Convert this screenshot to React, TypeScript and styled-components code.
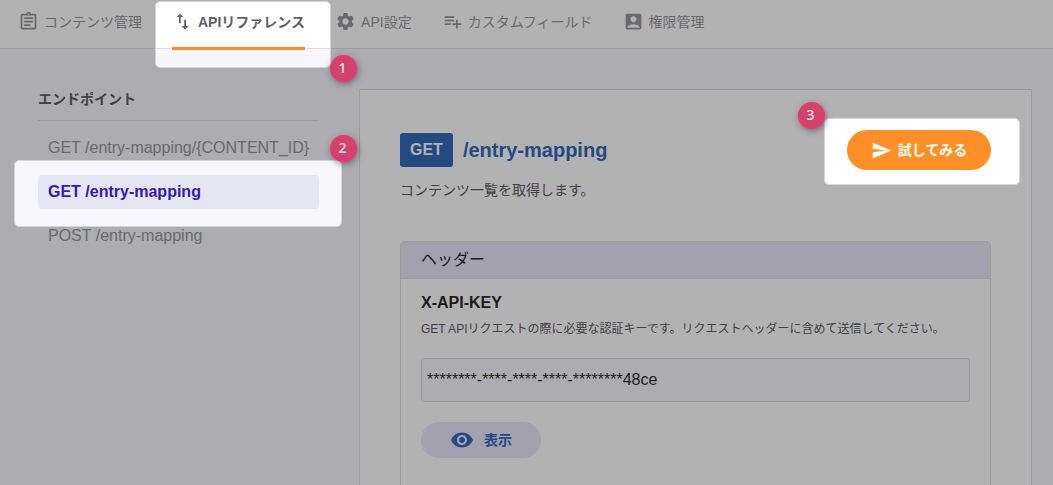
import React from "react";
import styled, { createGlobalStyle, css } from "styled-components";
import {
  MdAccountBox,
  MdImportExport,
  MdOutlineAssignment,
  MdPlaylistAdd,
  MdRemoveRedEye,
  MdSend,
  MdSettings,
} from "react-icons/md";

const color = {
  pageDim: "#adacb1",
  pageLit: "#f7f6fc",
  surfaceDim: "#b2b2b2",
  surfaceLit: "#ffffff",
  lineDim: "#9b9b9b",
  lineLit: "#dddddd",
  bandDim: "#a2a1ad",
  mutedDim: "#6a6a6d",
  bodyDim: "#414145",
  strongDim: "#1c1c20",
  blueDim: "#234a82",
  activeTab: "#5f5f66",
  activeLink: "#3319c0",
  activeFill: "#e6e6f2",
  orange: "#ff9027",
};

const GlobalStyle = createGlobalStyle`
  *, *::before, *::after { box-sizing: border-box; }
  body {
    margin: 0;
    background: ${color.pageDim};
    font-family: "Liberation Sans", "Noto Sans CJK JP", sans-serif;
    font-size: 14px;
    line-height: 20px;
  }
  h1, h2, p, ul { margin: 0; padding: 0; }
  button, input { font: inherit; }
`;

const Page = styled.div`
  display: flex;
  flex-direction: column;
  min-height: 100vh;
`;

const TabBar = styled.nav`
  display: flex;
  gap: 30px;
  height: 49px;
  padding: 0 18px;
  background: ${color.surfaceDim};
  border-bottom: 1px solid ${color.lineDim};
`;

const Tab = styled.a<{ $active?: boolean }>`
  position: relative;
  display: flex;
  align-items: center;
  gap: 5px;
  padding-bottom: 5px;
  color: ${color.mutedDim};
  text-decoration: none;
  white-space: nowrap;

  ${(p) =>
    p.$active &&
    css`
      z-index: 1;
      color: ${color.activeTab};
      font-weight: bold;

      &::after {
        content: "";
        position: absolute;
        left: 0;
        right: 0;
        bottom: -2px;
        height: 3px;
        background: ${color.orange};
      }
    `}
`;

const Spotlight = styled.span<{ $inset: string; $fill: string }>`
  position: absolute;
  z-index: -1;
  inset: ${(p) => p.$inset};
  border: 1px solid #d6d6da;
  border-radius: 5px;
  background: ${(p) => p.$fill};
`;

const Callout = styled.span<{ $top: number; $left?: number; $right?: number }>`
  position: absolute;
  z-index: 2;
  top: ${(p) => p.$top}px;
  ${(p) => p.$left !== undefined && `left: ${p.$left}px;`}
  ${(p) => p.$right !== undefined && `right: ${p.$right}px;`}
  width: 27px;
  height: 27px;
  padding-right: 2px;
  border: 2px solid #f0356d;
  border-radius: 50%;
  background: #d2426d;
  box-shadow: 1px 2px 6px rgba(60, 60, 80, 0.6);
  color: #f6e3ea;
  font-family: "Noto Sans", sans-serif;
  font-size: 14px;
  font-weight: 500;
  line-height: 22px;
  text-align: center;
`;

const Columns = styled.div`
  flex: 1;
  display: grid;
  grid-template-columns: 281px minmax(0, 1fr);
  gap: 40px;
  padding: 40px 21px 0 38px;
`;

const Sidebar = styled.aside`
  color: ${color.mutedDim};
`;

const SidebarTitle = styled.h2`
  padding-bottom: 11px;
  border-bottom: 1px solid ${color.lineDim};
  color: ${color.bodyDim};
  font-size: 14px;
  line-height: 20px;
`;

const EndpointList = styled.ul`
  display: flex;
  flex-direction: column;
  gap: 10px;
  padding-top: 10px;
  list-style: none;
`;

const EndpointItem = styled.li`
  position: relative;
`;

const Endpoint = styled.a<{ $active?: boolean }>`
  position: relative;
  z-index: ${(p) => (p.$active ? 1 : 0)};
  display: block;
  padding: 6px 10px;
  border-radius: 4px;
  background: ${(p) => (p.$active ? color.activeFill : "transparent")};
  color: ${(p) => (p.$active ? color.activeLink : color.mutedDim)};
  font-size: 16px;
  font-weight: ${(p) => (p.$active ? "bold" : "normal")};
  line-height: 22px;
  text-decoration: none;
  white-space: nowrap;
`;

const Lit = styled.div`
  position: relative;
  z-index: 1;
`;

const Card = styled.main`
  display: flex;
  flex-direction: column;
  padding: 40px 40px 0;
  background: ${color.surfaceDim};
  border: 1px solid ${color.lineDim};
  border-bottom: 0;
`;

const CardHead = styled.header`
  display: flex;
  justify-content: space-between;
  align-items: flex-start;
`;

const Heading = styled.h1`
  display: flex;
  align-items: center;
  gap: 10px;
  padding-top: 3px;
  color: ${color.blueDim};
  font-size: 20px;
`;

const Method = styled.span`
  padding: 0 10px;
  border-radius: 3px;
  background: ${color.blueDim};
  color: ${color.surfaceDim};
  font-size: 16px;
  line-height: 34px;
`;

const Summary = styled.p`
  padding: 10px 0 41px;
  color: ${color.bodyDim};
`;

const PillButton = styled.button<{ $primary?: boolean }>`
  display: flex;
  align-items: center;
  justify-content: center;
  gap: ${(p) => (p.$primary ? 6 : 10)}px;
  width: ${(p) => (p.$primary ? 144 : 120)}px;
  height: ${(p) => (p.$primary ? 40 : 36)}px;
  padding: 0;
  border: 0;
  border-radius: 20px;
  background: ${(p) => (p.$primary ? color.orange : color.bandDim)};
  color: ${(p) => (p.$primary ? color.surfaceLit : color.blueDim)};
  font-weight: bold;
`;

const Section = styled.section`
  flex: 1;
  border: 1px solid ${color.lineDim};
  border-bottom: 0;
  border-radius: 5px 5px 0 0;
`;

const SectionTitle = styled.h2`
  padding: 0 20px;
  border-bottom: 1px solid ${color.lineDim};
  border-radius: 4px 4px 0 0;
  background: ${color.bandDim};
  color: ${color.strongDim};
  font-size: 16px;
  font-weight: normal;
  line-height: 36px;
`;

const SectionBody = styled.div`
  padding: 14px 20px 27px;
`;

const KeyLabel = styled.label`
  display: block;
  color: ${color.strongDim};
  font-size: 16px;
  font-weight: bold;
`;

const KeyHelp = styled.p`
  padding: 6px 0 19px;
  color: ${color.bodyDim};
  font-size: 12px;
`;

const KeyInput = styled.input`
  display: block;
  width: 100%;
  height: 44px;
  margin-bottom: 20px;
  padding: 0 5px;
  border: 1px solid ${color.lineDim};
  border-radius: 2px;
  background: ${color.pageDim};
  color: ${color.strongDim};
  font-size: 16px;
  outline: 0;
`;

export default function App() {
  return (
    <Page>
      <GlobalStyle />
      <TabBar>
        <Tab href="#contents">
          <MdOutlineAssignment size={21} />
          コンテンツ管理
        </Tab>
        <Tab href="#reference" $active aria-current="page">
          <Spotlight
            $inset="1px -26px -20px -17px"
            $fill={`linear-gradient(${color.surfaceLit} 46px, ${color.lineLit} 46px 47px, ${color.pageLit} 47px)`}
          />
          <MdImportExport size={21} />
          APIリファレンス
          <Callout $top={55} $right={-52}>1</Callout>
        </Tab>
        <Tab href="#settings">
          <MdSettings size={21} />
          API設定
        </Tab>
        <Tab href="#fields">
          <MdPlaylistAdd size={21} />
          カスタムフィールド
        </Tab>
        <Tab href="#permissions">
          <MdAccountBox size={21} />
          権限管理
        </Tab>
      </TabBar>

      <Columns>
        <Sidebar>
          <SidebarTitle>エンドポイント</SidebarTitle>
          <EndpointList>
            <EndpointItem>
              <Endpoint href="#get-one">GET /entry-mapping/{"{CONTENT_ID}"}</Endpoint>
            </EndpointItem>
            <EndpointItem>
              <Lit>
                <Spotlight $inset="-15px -23px -18px -24px" $fill={color.pageLit} />
                <Endpoint href="#get-list" $active>GET /entry-mapping</Endpoint>
                <Callout $top={-40} $right={-38}>2</Callout>
              </Lit>
            </EndpointItem>
            <EndpointItem>
              <Endpoint href="#post">POST /entry-mapping</Endpoint>
            </EndpointItem>
          </EndpointList>
        </Sidebar>

        <Card>
          <CardHead>
            <Heading>
              <Method>GET</Method>
              /entry-mapping
            </Heading>
            <Lit>
              <Spotlight $inset="-12px -29px -15px -23px" $fill={color.surfaceLit} />
              <PillButton $primary type="button">
                <MdSend size={21} />
                試してみる
              </PillButton>
              <Callout $top={-28} $left={-49}>3</Callout>
            </Lit>
          </CardHead>
          <Summary>コンテンツ一覧を取得します。</Summary>

          <Section>
            <SectionTitle>ヘッダー</SectionTitle>
            <SectionBody>
              <KeyLabel htmlFor="api-key">X-API-KEY</KeyLabel>
              <KeyHelp>
                GET APIリクエストの際に必要な認証キーです。リクエストヘッダーに含めて送信してください。
              </KeyHelp>
              <KeyInput id="api-key" readOnly value="********-****-****-****-********48ce" />
              <PillButton type="button">
                <MdRemoveRedEye size={24} />
                表示
              </PillButton>
            </SectionBody>
          </Section>
        </Card>
      </Columns>
    </Page>
  );
}
